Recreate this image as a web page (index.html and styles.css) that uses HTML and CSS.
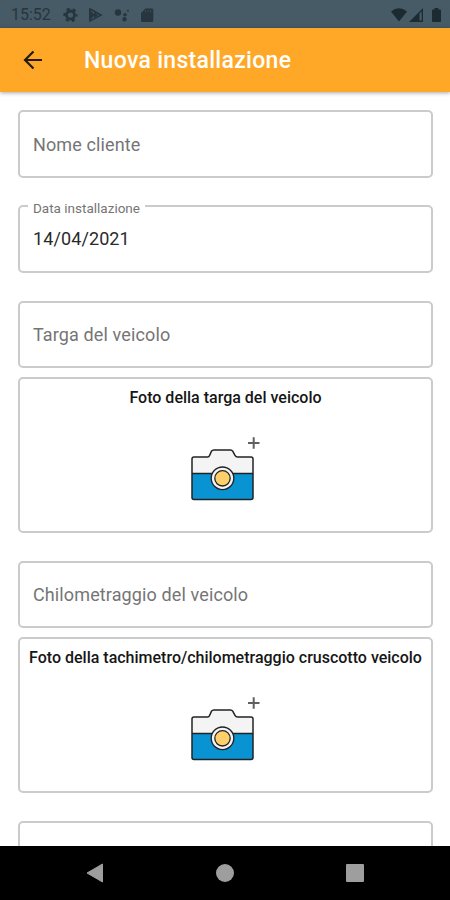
FILE: index.html
```html
<!DOCTYPE html>
<html lang="it">
<head>
    <meta charset="UTF-8">
    <meta name="viewport" content="width=device-width, initial-scale=1.0">
    <title>Nuova installazione</title>
    <link rel="stylesheet" href="styles.css">
</head>
<body>
    <div class="status-bar">
        <span class="time">15:52</span>
        <svg class="status-left" width="90" height="18" viewBox="0 0 90 18">
            <g fill="none" stroke="#26353e">
                <circle cx="8.500" cy="9" r="4" stroke-width="2.800"/>
                <circle cx="8.500" cy="9" r="6.200" stroke-width="2" stroke-dasharray="3.200 3.290" stroke-dashoffset="1.600"/>
            </g>
            <path d="M28 3L39 9L28 15Z" fill="none" stroke="#26353e" stroke-width="1.600"/>
            <path d="M27 3L33 9L27 15ZM32 6L36 9L32 12Z" fill="#26353e"/>
            <g fill="#26353e">
                <circle cx="56" cy="6.500" r="3.200"/>
                <circle cx="63" cy="8.800" r="1.800"/>
                <circle cx="62.500" cy="13.300" r="2.200"/>
                <circle cx="66" cy="4.800" r="1"/>
                <path d="M83.500 2.500H90a1.300 1.300 0 0 1 1.300 1.300v10.900a1.300 1.300 0 0 1-1.300 1.300h-9.700a1.300 1.300 0 0 1-1.300-1.300V7Z"/>
            </g>
            <path d="M83.500 4v2.500M86 4v2.500M88.500 4v2.500" stroke="#465b65" stroke-width="0.600"/>
        </svg>
        <svg class="status-right" width="52" height="18" viewBox="0 0 52 18">
            <g fill="#1c2a32">
                <path d="M1 5.500Q9 -1 17 5.500L9 15.500Z"/>
                <path d="M19 16L33 2V16ZM29.500 7.500V14.500H31.700V5.300Z" fill-rule="evenodd"/>
                <path d="M43 3.500h1.600V2h3.800v1.500H50q1 0 1 1v10.500q0 1-1 1h-7q-1 0-1-1v-10.500q0-1 1-1Z"/>
            </g>
        </svg>
    </div>

    <header class="app-bar">
        <svg width="20" height="20" viewBox="0 0 20 20" fill="none" stroke="#241b0c" stroke-width="2.200">
            <path d="M19 10H2.500M10.500 1.500L2 10L10.500 18.500"/>
        </svg>
        <h1>Nuova installazione</h1>
    </header>

    <main class="form">
        <div class="field"><span class="placeholder">Nome cliente</span></div>
        <div class="field date">
            <span class="label">Data installazione</span>
            <span class="value">14/04/2021</span>
        </div>
        <div class="group">
            <div class="field"><span class="placeholder">Targa del veicolo</span></div>
            <div class="photo">
                <h2>Foto della targa del veicolo</h2>
                <svg class="camera" width="72" height="68" viewBox="0 0 72 68">
                    <path d="M4 23Q4 21 6 21H19.500Q21 21 21.700 19.300L23.500 15.200Q24.200 14 26 14H42.500Q44 14 44.700 15.200L47 19.300Q48 21 49.500 21H63Q65 21 65 23V40H4Z" fill="#f4f4f4"/>
                    <path d="M4 37.500H65V62Q65 63.500 63 63.500H6Q4 63.500 4 62Z" fill="#0a93d2"/>
                    <path d="M4 37.500H65M4 23Q4 21 6 21H19.500Q21 21 21.700 19.300L23.500 15.200Q24.200 14 26 14H42.500Q44 14 44.700 15.200L47 19.300Q48 21 49.500 21H63Q65 21 65 23V61.500Q65 63.500 63 63.500H6Q4 63.500 4 61.500Z" fill="none" stroke="#202326" stroke-width="1.500"/>
                    <circle cx="34.500" cy="42.300" r="11.300" fill="#f4f4f4" stroke="#202326" stroke-width="1.300"/>
                    <circle cx="34.500" cy="42.300" r="7.700" fill="#ffcf69" stroke="#202326" stroke-width="1.300"/>
                    <path d="M60 7H71.500M65.700 1.200V12.800" stroke="#606060" stroke-width="2"/>
                </svg>
            </div>
        </div>
        <div class="group">
            <div class="field"><span class="placeholder">Chilometraggio del veicolo</span></div>
            <div class="photo">
                <h2>Foto della tachimetro/chilometraggio cruscotto veicolo</h2>
                <svg class="camera" width="72" height="68" viewBox="0 0 72 68">
                    <path d="M4 23Q4 21 6 21H19.500Q21 21 21.700 19.300L23.500 15.200Q24.200 14 26 14H42.500Q44 14 44.700 15.200L47 19.300Q48 21 49.500 21H63Q65 21 65 23V40H4Z" fill="#f4f4f4"/>
                    <path d="M4 37.500H65V62Q65 63.500 63 63.500H6Q4 63.500 4 62Z" fill="#0a93d2"/>
                    <path d="M4 37.500H65M4 23Q4 21 6 21H19.500Q21 21 21.700 19.300L23.500 15.200Q24.200 14 26 14H42.500Q44 14 44.700 15.200L47 19.300Q48 21 49.500 21H63Q65 21 65 23V61.500Q65 63.500 63 63.500H6Q4 63.500 4 61.500Z" fill="none" stroke="#202326" stroke-width="1.500"/>
                    <circle cx="34.500" cy="42.300" r="11.300" fill="#f4f4f4" stroke="#202326" stroke-width="1.300"/>
                    <circle cx="34.500" cy="42.300" r="7.700" fill="#ffcf69" stroke="#202326" stroke-width="1.300"/>
                    <path d="M60 7H71.500M65.700 1.200V12.800" stroke="#606060" stroke-width="2"/>
                </svg>
            </div>
        </div>
        <div class="field"></div>
    </main>

    <nav class="nav-bar">
        <svg width="18" height="20" viewBox="0 0 18 20"><path d="M1 10L16.500 1V19Z" fill="#9e9e9e" stroke="#9e9e9e" stroke-linejoin="round"/></svg>
        <span class="home"></span>
        <span class="recent"></span>
    </nav>
</body>
</html>
```
FILE: styles.css
```css
:root {
    --primary-color: #ffa726;
    --status-color: #465b65;
    --border-color: #cbcbcb;
    --hint-color: #757575;
}

* {
    margin: 0;
    padding: 0;
    box-sizing: border-box;
}

body {
    font-family: Roboto, "Liberation Sans", sans-serif;
    background: #fff;
    width: 450px;
    height: 900px;
    display: flex;
    flex-direction: column;
    overflow: hidden;
}

svg {
    display: block;
    flex: none;
}

/* Barra di stato */
.status-bar {
    flex: none;
    height: 28px;
    background: var(--status-color);
    display: flex;
    align-items: center;
    padding: 1px 8px 0 11px;
}

.time {
    width: 51px;
    font-size: 16px;
    line-height: 18px;
    color: #26353e;
}

.status-left {
    overflow: visible;
}

.status-right {
    margin-left: auto;
}

/* Intestazione */
.app-bar {
    flex: none;
    height: 64px;
    background: var(--primary-color);
    display: flex;
    align-items: center;
    gap: 41px;
    padding-left: 23px;
    box-shadow: 0 1px 4px rgba(0, 0, 0, 0.35);
    z-index: 1;
}

.app-bar h1 {
    color: #fff;
    font-size: 23px;
    font-weight: 500;
    letter-spacing: 0.3px;
    white-space: nowrap;
}

/* Modulo */
.form {
    flex: 1;
    min-height: 0;
    overflow: hidden;
    padding: 18px 17px 0 18px;
    display: flex;
    flex-direction: column;
    gap: 27px;
}

.field {
    position: relative;
    flex: none;
    height: 68px;
    border: 2px solid var(--border-color);
    border-radius: 5px;
    padding: 0 13px;
    display: flex;
    align-items: center;
    font-size: 18px;
    white-space: nowrap;
}

.placeholder {
    color: var(--hint-color);
    letter-spacing: 0.12px;
}

.value {
    color: #2a2a2a;
    letter-spacing: 0.1px;
}

.date {
    padding-bottom: 2px;
}

.label {
    position: absolute;
    top: -7px;
    left: 8px;
    padding: 0 5px;
    background: #fff;
    color: var(--hint-color);
    font-size: 13.5px;
    line-height: 16px;
}

.group {
    flex: none;
    display: flex;
    flex-direction: column;
    gap: 9px;
}

.group .field {
    height: 67px;
}

.date + .group {
    margin-top: 1px;
}

.photo {
    height: 156px;
    border: 2px solid var(--border-color);
    border-radius: 5px;
    padding-top: 9px;
    display: flex;
    flex-direction: column;
    align-items: center;
}

.group + .group,
.group + .field {
    margin-top: 1px;
}

.photo h2 {
    color: #161616;
    font-size: 16px;
    font-weight: 500;
    line-height: 20px;
    white-space: nowrap;
}

.camera {
    margin: 28px 3px 0 0;
}

/* Barra di navigazione */
.nav-bar {
    flex: none;
    height: 54px;
    background: #000;
    display: flex;
    align-items: center;
    justify-content: space-between;
    padding: 0 86px;
}

.home {
    width: 18px;
    height: 18px;
    border-radius: 50%;
    background: #9e9e9e;
}

.recent {
    width: 18px;
    height: 18px;
    border-radius: 1px;
    background: #9e9e9e;
}
```
